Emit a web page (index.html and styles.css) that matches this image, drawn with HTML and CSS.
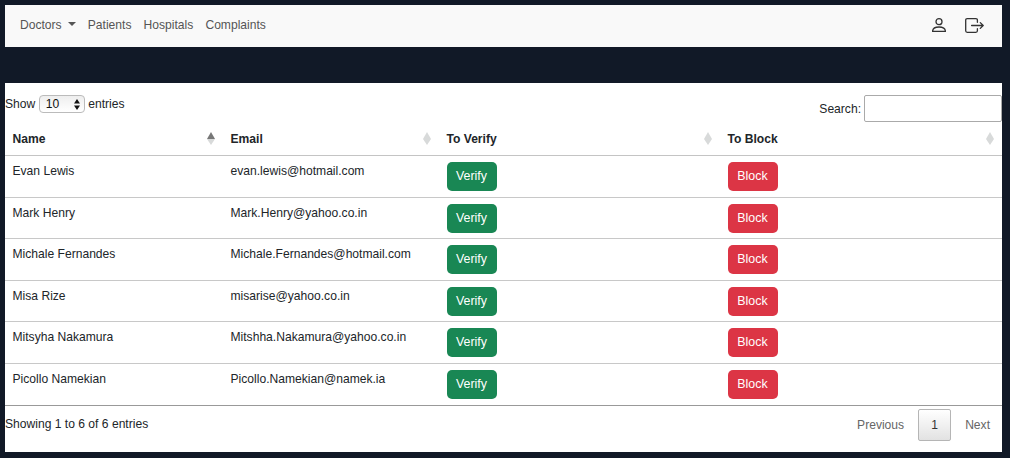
FILE: index.html
```html
<!DOCTYPE html>
<html lang="en">
<head>
<meta charset="utf-8">
<title>Doctors</title>
<link rel="stylesheet" href="styles.css">
</head>
<body>
<nav class="navbar">
  <div class="links">
    <a class="dropdown">Doctors<span class="caret"></span></a>
    <a>Patients</a>
    <a>Hospitals</a>
    <a>Complaints</a>
  </div>
  <div class="actions">
    <svg class="icon-user" viewBox="0 0 14 14"><circle cx="7" cy="3.700" r="3"/><path d="M.6 13.400C.6 10.500 3 9 7 9s6.400 1.500 6.400 4.400z"/></svg>
    <svg class="icon-exit" viewBox="0 0 19 15"><path d="M12.400 4.300V2.200Q12.400.7 10.900.7H2.200Q.7.7.7 2.200v10.600q0 1.500 1.500 1.500h8.700q1.500 0 1.500-1.500v-2.100M6.600 7.500h11.400M15.300 4.600l2.900 2.900-2.900 2.900"/></svg>
  </div>
</nav>
<main class="panel">
  <div class="controls">
    <div class="length">Show <span class="select">10<svg viewBox="0 0 6 11"><path d="M3 0l3 4.600H0zM3 11L0 6.400h6z"/></svg></span> entries</div>
    <label class="search">Search:<input type="text"></label>
  </div>
  <table>
    <colgroup><col class="c-name"><col class="c-email"><col class="c-verify"><col></colgroup>
    <thead>
      <tr>
        <th><div class="head">Name<span class="sort asc"></span></div></th>
        <th><div class="head">Email<span class="sort"></span></div></th>
        <th><div class="head">To Verify<span class="sort"></span></div></th>
        <th><div class="head">To Block<span class="sort"></span></div></th>
      </tr>
    </thead>
    <tbody>
      <tr><td>Evan Lewis</td><td>evan.lewis@hotmail.com</td><td><button class="btn verify">Verify</button></td><td><button class="btn block">Block</button></td></tr>
      <tr><td>Mark Henry</td><td>Mark.Henry@yahoo.co.in</td><td><button class="btn verify">Verify</button></td><td><button class="btn block">Block</button></td></tr>
      <tr><td>Michale Fernandes</td><td>Michale.Fernandes@hotmail.com</td><td><button class="btn verify">Verify</button></td><td><button class="btn block">Block</button></td></tr>
      <tr><td>Misa Rize</td><td>misarise@yahoo.co.in</td><td><button class="btn verify">Verify</button></td><td><button class="btn block">Block</button></td></tr>
      <tr><td>Mitsyha Nakamura</td><td>Mitshha.Nakamura@yahoo.co.in</td><td><button class="btn verify">Verify</button></td><td><button class="btn block">Block</button></td></tr>
      <tr><td>Picollo Namekian</td><td>Picollo.Namekian@namek.ia</td><td><button class="btn verify">Verify</button></td><td><button class="btn block">Block</button></td></tr>
    </tbody>
  </table>
  <div class="footer">
    <div class="info">Showing 1 to 6 of 6 entries</div>
    <div class="pages"><a>Previous</a><a class="current">1</a><a>Next</a></div>
  </div>
</main>
</body>
</html>
```
FILE: styles.css
```css
* { box-sizing: border-box; }
body {
  margin: 0;
  height: 458px;
  padding: 5px 8px 5px 5px;
  overflow: hidden;
  background: #111927;
  color: #212529;
  font: 12.1px/18px "Liberation Sans", Arial, sans-serif;
}
.navbar {
  display: flex;
  justify-content: space-between;
  align-items: center;
  height: 42px;
  padding: 0 18px 2px 15px;
  background: #f9f9f9;
  color: #555;
}
.links { display: flex; gap: 12.1px; }
.caret {
  display: inline-block;
  margin-left: 6px;
  vertical-align: 3px;
  border: 4px solid transparent;
  border-top-color: #555;
  border-bottom: 0;
}
.actions { display: flex; align-items: center; gap: 19px; }
.actions svg { fill: none; stroke: #333; stroke-width: 1.3; stroke-linejoin: round; stroke-linecap: round; }
.icon-user { width: 14px; height: 14px; }
.icon-exit { width: 19px; height: 15px; }
.panel { height: 369px; margin-top: 36px; padding-top: 12px; background: #fff; }
.controls { display: flex; justify-content: space-between; align-items: flex-start; height: 27px; }
.length { display: flex; align-items: center; gap: 3.500px; height: 18px; }
.select {
  display: flex;
  align-items: center;
  justify-content: space-between;
  width: 46px;
  height: 18px;
  padding: 0 4px 0 6px;
  border: 1px solid #bbb;
  border-radius: 4px;
  background: linear-gradient(#eee, #fff);
  color: #111;
}
.select svg { width: 6px; height: 11px; fill: #111; }
.search { display: flex; align-items: center; gap: 3px; height: 27px; }
.search input { width: 138px; height: 27px; border: 1px solid #aaa; border-radius: 2px; background: transparent; }
table { width: 100%; table-layout: fixed; border-collapse: separate; border-spacing: 0; border-bottom: 1px solid #999; }
.c-name { width: 218px; }
.c-email { width: 216px; }
.c-verify { width: 281px; }
th { height: 34px; padding: 0 8px 0 7.500px; border-bottom: 1px solid #c4c4c4; text-align: left; }
.head { display: flex; justify-content: space-between; align-items: center; }
.sort { display: flex; flex-direction: column; }
.sort::before, .sort::after { content: ""; border: 4px solid transparent; }
.sort::before { border-bottom: 7px solid #d8dada; border-top: 0; }
.sort::after { border-top: 6px solid #d8dada; border-bottom: 0; }
.sort.asc::before { border-bottom-color: #777; }
td { height: 42px; padding: 6px 7.500px 5px; vertical-align: top; border-bottom: 1px solid #c8c8c8; }
tr:nth-child(even) td { height: 41px; }
tr:last-child td { border-bottom: 0; }
.btn {
  display: block;
  width: 50px;
  height: 29px;
  padding: 0 0 1px;
  border: 0;
  border-radius: 5px;
  color: #fff;
  font: inherit;
  font-size: 12.4px;
}
.verify { background: #198754; }
.block { background: #dc3545; }
.footer { display: flex; justify-content: space-between; padding-top: 3px; }
.info { padding-top: 6px; }
.pages { display: flex; align-items: center; color: #666; padding-right: 12px; }
.pages .current {
  width: 33px;
  height: 32px;
  margin: 0 14px;
  border: 1px solid #b5b5b5;
  border-radius: 2px;
  background: linear-gradient(#fff, #e2e2e2);
  color: #333;
  line-height: 31px;
  text-align: center;
}
```
